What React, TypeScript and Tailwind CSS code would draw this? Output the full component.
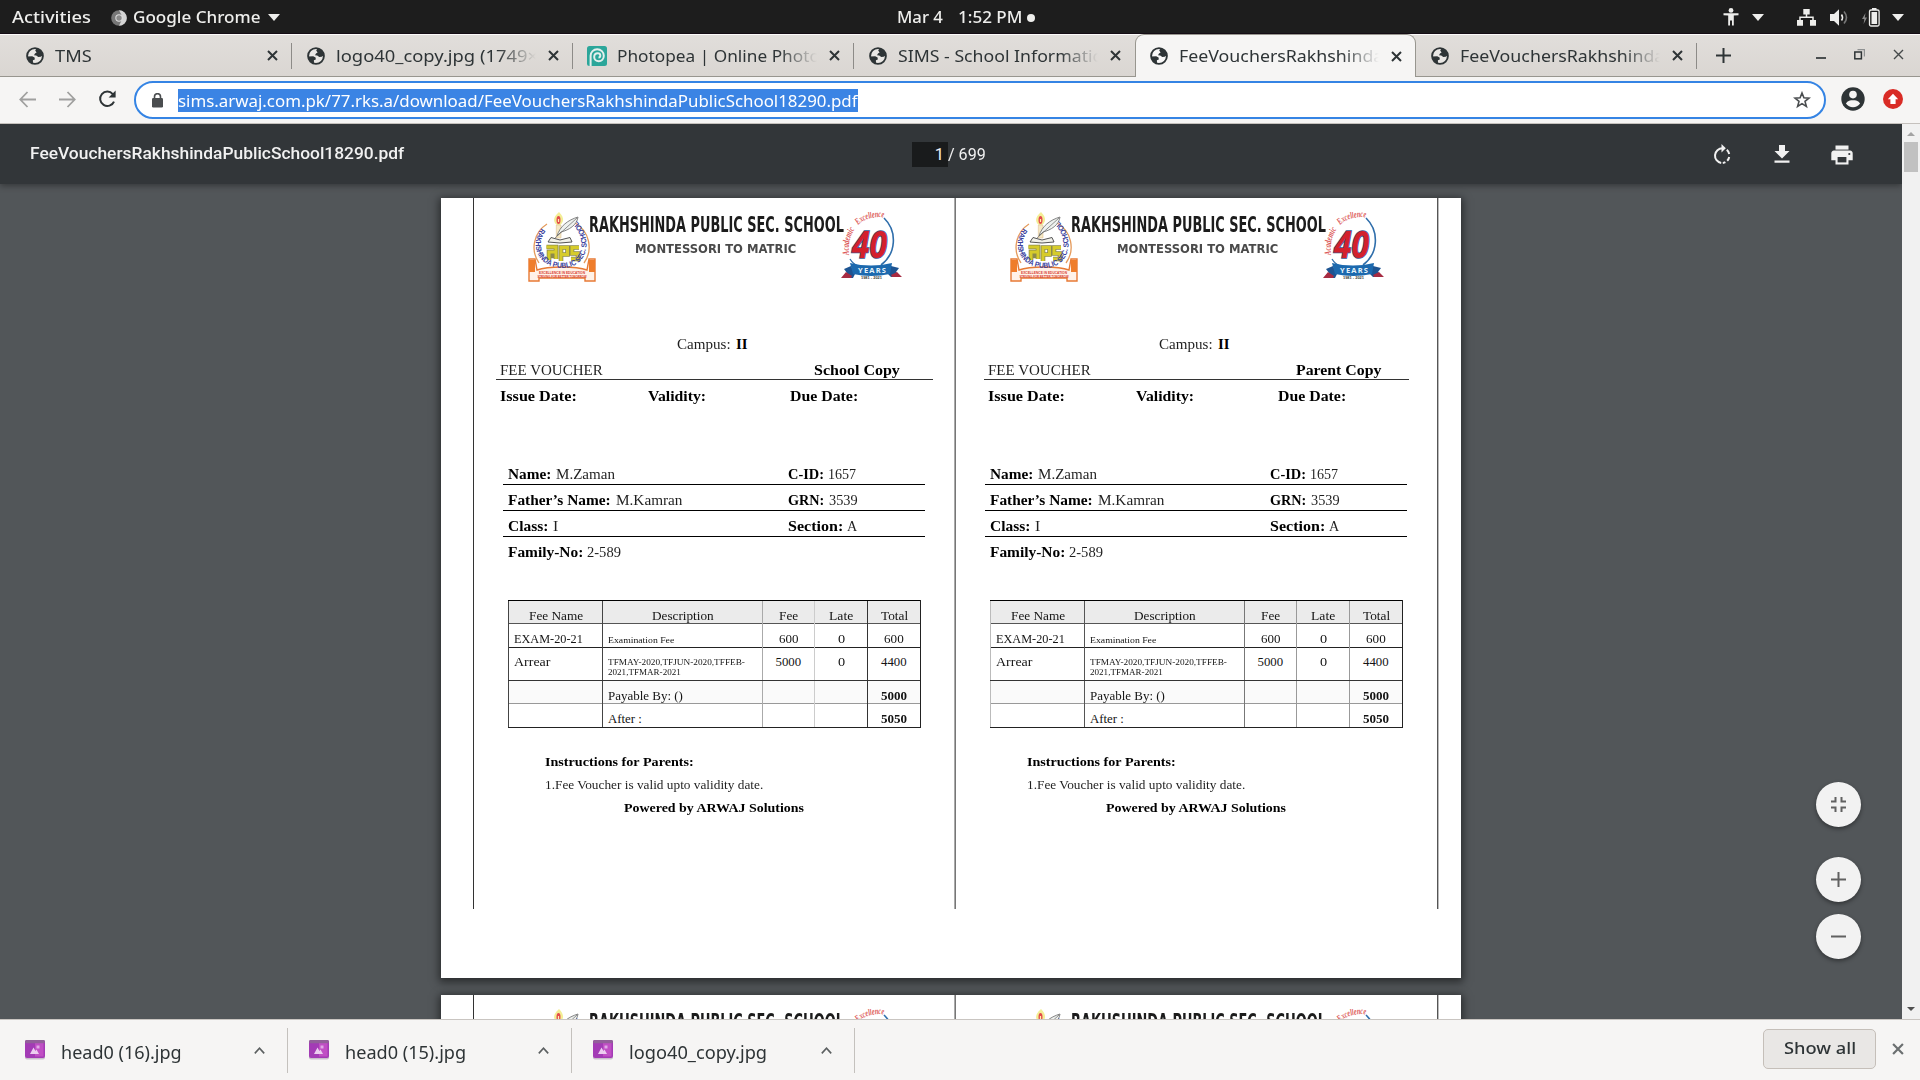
import { useLayoutEffect, useRef, useState, type ReactNode } from "react";

/* Stretches a run of text horizontally so that it fills a given width. */
function Fit({ w, className = "", children }: { w: number; className?: string; children: ReactNode }) {
  const ref = useRef<HTMLSpanElement>(null);
  const [k, setK] = useState(1);
  useLayoutEffect(() => {
    if (ref.current) setK(w / ref.current.offsetWidth);
  }, [w]);
  return (
    <span className={"inline-block shrink-0 whitespace-pre text-left " + className} style={{ width: w }}>
      <span ref={ref} className="inline-block origin-left" style={{ transform: `scaleX(${k})` }}>
        {children}
      </span>
    </span>
  );
}

const Globe = () => (
  <svg width="18" height="18" viewBox="0 0 18 18" className="shrink-0">
    <circle cx="9" cy="9" r="7.9" fill="#fff" fillOpacity="0.35" stroke="#2e3436" strokeWidth="1.9" />
    <path d="M10.5 1.5 9.2 3.6 10.6 5.4 9 6.6 8 8.2 10.2 8.6 12.3 9.9 14.7 9.8 16.6 8.6A8 8 0 0 0 10.5 1.5Z" fill="#2e3436" />
    <path d="M1.3 9.4 6.2 9.3 8.6 10.6 8.8 12.4 6.9 13.3 7 16.6A8 8 0 0 1 1.3 9.4Z" fill="#2e3436" />
  </svg>
);

const Photopea = () => (
  <svg width="20" height="20" viewBox="0 0 20 20" className="shrink-0">
    <rect width="20" height="20" rx="2.5" fill="#2ba69a" />
    <path d="M3.6 20V9.8a6.6 6.6 0 0 1 13.2 0c0 3.4-2.5 5.4-5 5.4-2.6 0-4.6-1.7-4.6-4.3 0-2.2 1.6-3.7 3.5-3.7 1.5 0 2.6 1 2.6 2.4 0 1.2-.8 2-1.8 2" fill="none" stroke="#e4efed" strokeWidth="2" />
  </svg>
);

const Cross = ({ size = 11, sw = 2, color = "#2e3436" }: { size?: number; sw?: number; color?: string }) => (
  <svg width={size} height={size} viewBox="0 0 11 11" className="shrink-0">
    <path d="M1 1 10 10M10 1 1 10" stroke={color} strokeWidth={sw} />
  </svg>
);

const Down = () => (
  <svg width="12" height="7" viewBox="0 0 12 7">
    <path d="M0 0H12L6 7Z" fill="#eeeeec" />
  </svg>
);

function TopBar() {
  return (
    <div className="grid h-[34px] grid-cols-[897px_1fr_201px] items-center border-b border-[#150d15] bg-[#1d1d1d] text-[16px] font-medium leading-[33px] text-[#eeeeec]">
      <div className="flex items-center pl-3">
        <Fit w={79} className="pt-px">Activities</Fit>
        <svg width="16" height="16" viewBox="0 0 16 16" className="ml-[20px] mr-[6px] mt-px">
          <circle cx="8" cy="8" r="7.8" fill="#777" />
          <path d="M8 .2a7.8 7.8 0 0 1 0 15.6L11 9.5 10.5 5Z" fill="#d4d4d4" />
          <circle cx="8" cy="8" r="3.7" fill="#e0e0e0" />
          <circle cx="8" cy="8" r="2.7" fill="#8a8a8a" />
        </svg>
        <Fit w={128} className="mr-[7px] pt-px">Google Chrome</Fit>
        <Down />
      </div>
      <div className="flex items-center">
        <Fit w={46} className="pt-px">Mar 4</Fit>
        <Fit w={64} className="ml-[15px] pt-px">1:52 PM</Fit>
        <span className="ml-[5px] mt-px size-2 rounded-full bg-[#eeeeec]" />
      </div>
      <div className="flex items-center pl-px">
        <svg width="16" height="18" viewBox="0 0 16 18" className="ml-[3px]" fill="#eeeeec">
          <circle cx="8" cy="2.4" r="2.4" />
          <path d="M.5 5.2H15.5V7.2L10.8 7.6V17.5H9V12.5H7V17.5H5.2V7.6L.5 7.2Z" />
        </svg>
        <span className="ml-[13px]"><Down /></span>
        <svg width="19" height="17" viewBox="0 0 19 17" className="ml-[33px]" fill="#eeeeec">
          <path d="M6.3 0h6.4v5.4H6.3zM0 11h6v5.8H0zM13 11h6v5.8h-6z" />
          <path d="M9.5 5V8.3M3 11.5V8.3H16V11.5" fill="none" stroke="#eeeeec" strokeWidth="1.5" />
        </svg>
        <svg width="19" height="17" viewBox="0 0 19 17" className="ml-[14px]">
          <path d="M0 5H4L9 .3V16.7L4 12H0Z" fill="#eeeeec" />
          <path d="M11.5 5.5Q13.5 8.5 11.5 11.5" fill="none" stroke="#eeeeec" strokeWidth="1.6" />
          <path d="M14 2.5Q19 8.5 14 14.5" fill="none" stroke="#777" strokeWidth="1.6" />
        </svg>
        <svg width="18" height="19" viewBox="0 0 18 19" className="ml-[13px]">
          <path d="M3.5 5 0 11H2.3L1.6 16 5 9.5H2.8Z" fill="#888" />
          <rect x="7.5" y="2" width="9.6" height="16" rx="1.5" fill="none" stroke="#eeeeec" strokeWidth="1.3" />
          <path d="M10 0h4.5v2H10z" fill="#eeeeec" />
          <rect x="9.5" y="4" width="5.6" height="12" fill="#eeeeec" />
        </svg>
        <span className="ml-[12px]"><Down /></span>
      </div>
    </div>
  );
}

type TabData = { title: string; w: number; icon?: "pea"; active?: boolean; noSep?: boolean; fade?: boolean };
const tabs: TabData[] = [
  { title: "TMS", w: 36.5 },
  { title: "logo40_copy.jpg (1749×", w: 202, fade: true },
  { title: "Photopea | Online Photo", w: 203, icon: "pea", fade: true },
  { title: "SIMS - School Informatic", w: 203, noSep: true, fade: true },
  { title: "FeeVouchersRakhshinda", w: 204, active: true, fade: true },
  { title: "FeeVouchersRakhshinda", w: 204, fade: true },
];

function TabStrip() {
  return (
    <div className="flex h-[43px] bg-gradient-to-b from-[#e1dedb] to-[#dad6d2] pl-[11px] text-[17px] text-[#2e3436] shadow-[inset_0_1px_0_#fbfaf9,inset_0_-1px_0_#98968f]">
      {tabs.map((t, i) => (
        <div
          key={i}
          className={
            "relative flex w-[281px] shrink-0 items-center " +
            (t.active ? "rounded-t-[9px] border-x border-t border-[#98968f] bg-[#f6f5f4] pl-[14px]" : "pl-[15px]")
          }
        >
          {t.icon ? <span className="-ml-px"><Photopea /></span> : <Globe />}
          <div
            className={
              "w-[200px] overflow-hidden pb-px leading-[25px] " + (t.icon ? "ml-[10px] " : "ml-[11px] ") +
              (t.fade ? "[mask-image:linear-gradient(to_right,#000_81%,transparent)]" : "")
            }
          >
            <Fit w={t.w}>{t.title}</Fit>
          </div>
          <span className="ml-[12px] flex"><Cross /></span>
          {!t.active && !t.noSep && <span className="absolute right-0 top-[9px] h-[26px] w-px bg-[#8d8b88]" />}
        </div>
      ))}
      <svg width="15" height="15" viewBox="0 0 15 15" className="ml-[19px] mt-[14px]">
        <path d="M7.5 0V15M0 7.5H15" stroke="#2e3436" strokeWidth="2" />
      </svg>
      <span className="ml-[85px] mt-[23px] h-[1.5px] w-[10px] bg-[#4b4f50]" />
      <svg width="11" height="11" viewBox="0 0 11 11" className="ml-[28px] mt-[15px]" fill="none">
        <path d="M3.5 .6H10.4V7.5" stroke="#8f9192" strokeWidth="1.2" />
        <rect x=".8" y="3" width="6.6" height="6.8" stroke="#2e3436" strokeWidth="1.5" />
      </svg>
      <span className="ml-[28px] mt-[15px]"><Cross sw={1.4} color="#45494a" /></span>
    </div>
  );
}

function AddressBar() {
  return (
    <div className="flex h-[47px] items-center border-b border-[#c5c1bd] bg-[#f6f5f4] pl-[19px]">
      <svg width="17" height="17" viewBox="0 0 17 17" fill="none" stroke="#a0a09f" strokeWidth="1.8" className="-mt-[2px]">
        <path d="M8.5 1 1.3 8.5 8.5 16M1.3 8.5H17" />
      </svg>
      <svg width="17" height="17" viewBox="0 0 17 17" fill="none" stroke="#a0a09f" strokeWidth="1.8" className="-mt-[2px] ml-[23px]">
        <path d="M8.5 1 15.7 8.5 8.5 16M15.7 8.5H0" />
      </svg>
      <svg width="19" height="18" viewBox="0 0 19 18" className="-mt-[2px] ml-[22px]">
        <path d="M14.8 4.1A7.2 7.2 0 1 0 16 11.6" fill="none" stroke="#2e3436" strokeWidth="2" />
        <path d="M17.6.6V7.6H10.6Z" fill="#2e3436" />
      </svg>
      <div className="ml-[17px] flex h-[38px] w-[1692px] items-center rounded-full border-2 border-[#3584e4] bg-white pl-[16px]">
        <svg width="11" height="15" viewBox="0 0 11 15">
          <rect y="5" width="11" height="9.5" rx="1.2" fill="#4a4d4f" />
          <path d="M2.5 6V3.7a3 3 0 0 1 6 0V6" fill="none" stroke="#4a4d4f" strokeWidth="1.6" />
        </svg>
        <div className="ml-[15px] h-[23px] bg-[#3b84e4] text-[17px] leading-[23px] text-white">
          <Fit w={680}>sims.arwaj.com.pk/77.rks.a/download/FeeVouchersRakhshindaPublicSchool18290.pdf</Fit>
        </div>
        <svg width="18" height="18" viewBox="0 0 18 18" className="-mt-px ml-[935px]">
          <path d="M9 2 10.9 6.8 16 7.1 12 10.4 13.4 15.5 9 12.6 4.6 15.5 6 10.4 2 7.1 7.1 6.8Z" fill="none" stroke="#4a4d4f" strokeWidth="1.6" />
        </svg>
      </div>
      <svg width="24" height="24" viewBox="0 0 24 24" className="-mt-[2px] ml-[15px]">
        <circle cx="12" cy="12" r="11.7" fill="#2e3436" />
        <circle cx="12" cy="7.6" r="3.8" fill="#f6f5f4" />
        <path d="M4.9 16.4C6.5 13.6 9.5 13.2 12 13.2S17.5 13.6 19.1 16.4A8.6 8.6 0 0 1 4.9 16.4Z" fill="#f6f5f4" />
      </svg>
      <svg width="20" height="20" viewBox="0 0 20 20" className="-mt-[2px] ml-[18px]">
        <circle cx="10" cy="10" r="10" fill="#d92b25" />
        <path d="M10 4.8 15.2 10.3H12.6V15H7.4V10.3H4.8Z" fill="#fff" />
      </svg>
    </div>
  );
}

function PdfToolbar() {
  return (
    <div className="relative z-10 grid h-[60px] grid-cols-[882px_1fr_191px] items-center bg-[#323639] pl-[30px] font-['Roboto'] text-[16.5px] text-[#f1f1f1] shadow-[0_2px_6px_rgba(0,0,0,0.35)]">
      <Fit w={374} className="font-medium leading-[20px]">FeeVouchersRakhshindaPublicSchool18290.pdf</Fit>
      <div className="flex items-center">
        <span className="mt-px h-[25px] w-[36px] bg-[#191b1c] pr-[4px] text-right leading-[25px]">1</span>
        <Fit w={38} className="mt-px leading-[25px]">/ 699</Fit>
      </div>
      <div className="flex items-center">
        <svg width="18" height="21" viewBox="0 0 18 21" className="ml-[2px]" fill="none" stroke="#f1f1f1" strokeWidth="2">
          <path d="M9.5 4.3A7.4 7.4 0 0 0 8.2 19" />
          <path d="M8.5 0V8.4L12.8 4.2Z" fill="#f1f1f1" stroke="none" />
          <path d="M13.8 5.8A7.3 7.3 0 0 1 16.2 10M16.2 13A7.3 7.3 0 0 1 14.2 16.8M12.4 18.2A7.3 7.3 0 0 1 9.8 19" />
        </svg>
        <svg width="16" height="18" viewBox="0 0 16 18" className="ml-[43px]" fill="#f1f1f1">
          <path d="M5 0H11V6H15.5L8 13.4.5 6H5ZM.5 15.6H15.5V17.8H.5Z" />
        </svg>
        <svg width="22" height="20" viewBox="0 0 22 20" className="ml-[41px] mt-px">
          <path d="M4.5.5H17.5V4.6H4.5Z" fill="#f1f1f1" />
          <path d="M3 5.6H19A3 3 0 0 1 21.7 8.6V15.2H17.5V19.5H4.5V15.2H.3V8.6A3 3 0 0 1 3 5.6Z" fill="#f1f1f1" />
          <path d="M6.6 12H15.4V17.4H6.6Z" fill="#323639" />
          <circle cx="18.3" cy="9" r="1.1" fill="#323639" />
        </svg>
      </div>
    </div>
  );
}

const Crest = ({ id }: { id: string }) => (
  <svg width="68" height="70" viewBox="0 0 68 70" className="shrink-0">
    <defs>
      <path id={id} d="M13.5 16C6 26 6 38 12 46 21 58 45 60 54 47 61 37 60 22 50 10.5" />
    </defs>
    <path d="M31 0C24 6 25 11 30.5 14 36 11 37 6 31 0Z" fill="#f3ee96" />
    <path d="M19 12A27.5 27.5 0 0 0 11 51M47 11A27.5 27.5 0 0 1 56 51" fill="none" stroke="#e59b5c" strokeWidth="1.3" />
    <ellipse cx="30.5" cy="8" rx="2" ry="4" fill="#e34b4b" />
    <path d="M30.5 7V10" stroke="#fff3b0" strokeWidth="1.2" />
    <path d="M28.3 13H33V26H28.3Z" fill="#f6e9c4" stroke="#d9b98a" strokeWidth=".5" />
    <path d="M20 30 23 25.5 32 28 42 25.5 44 30 32 31Z" fill="#f1f1ea" stroke="#555" strokeWidth="1" />
    <path d="M29 24C32 14 40 8 50 5 49 13 41 18 33 20Z" fill="#eef1ef" stroke="#777" strokeWidth=".9" />
    <path d="M27 26 49 6" stroke="#666" strokeWidth=".7" />
    <path d="M18.5 35H28V47M21 48V40H28M21.5 44H28M33 49V35.5H39.5V42.5H34M51 35.5H44V41.5H50V47H43" fill="none" stroke="#8d8a4a" strokeWidth="4.6" />
    <path d="M18.5 35H28V47M21 48V40H28M33 49V35.5H39.5V42.5H34M51 35.5H44V41.5H50V47H43" fill="none" stroke="#d6cb2a" strokeWidth="3" />
    <path d="M1 47H7L9 58C20 54 48 54 59 58L61 47H67V69H57V66H11V69H1Z" fill="#fff2e8" stroke="#e77a35" strokeWidth="1.4" />
    <path d="M1 48H7V60H1ZM61 48H67V60H61Z" fill="#ef7d2b" />
    <text fontFamily="Liberation Sans" fontWeight="700" fontSize="7.6" fill="#3a3f9e">
      <textPath href={"#" + id} textLength="121" lengthAdjust="spacingAndGlyphs">RAKHSHINDA PUBLIC SEC. SCHOOL</textPath>
    </text>
    <g fontFamily="Liberation Sans" fontWeight="700" fontSize="4" fill="#d8402f">
      <text x="11" y="62.2" textLength="46" lengthAdjust="spacingAndGlyphs">EXCELLENCE IN EDUCATION</text>
      <text x="9.5" y="66.4" textLength="49" lengthAdjust="spacingAndGlyphs">STRIVING FOR BETTER TOMORROW</text>
    </g>
  </svg>
);

const Forty = ({ id }: { id: string }) => (
  <svg width="61" height="67" viewBox="0 0 61 67" className="shrink-0">
    <defs>
      <path id={id + "a"} d="M8 43C7 34 8 25 14 17" />
      <path id={id + "b"} d="M17 13C23 7 32 4 44 5.5" />
    </defs>
    <path d="M43 6A31 31 0 0 1 40 53" fill="none" stroke="#2f6eab" strokeWidth="1.6" />
    <path d="M9 47Q12 52 17 54" fill="none" stroke="#2f6eab" strokeWidth="1.3" />
    <g fontFamily="Liberation Serif" fontStyle="italic" fontWeight="700" fontSize="9.5" fill="#dc5a58">
      <text>
        <textPath href={"#" + id + "a"} textLength="27" lengthAdjust="spacingAndGlyphs">Academic</textPath>
      </text>
      <text>
        <textPath href={"#" + id + "b"} textLength="28" lengthAdjust="spacingAndGlyphs">Excellence</textPath>
      </text>
    </g>
    <text x="11" y="45.5" fontFamily="Noto Sans" fontStyle="italic" fontWeight="700" fontSize="37" fill="#d3202c" stroke="#3a5590" strokeWidth="1.6" paintOrder="stroke" textLength="35" lengthAdjust="spacingAndGlyphs">40</text>
    <path d="M1 66 6 61 3 57 10 54 14 62 12 66ZM60 65 55 60 58 56 50 54 47 62 50 65Z" fill="#1d5492" />
    <path d="M0 66 5 60 11 64 10 66ZM61 65 56 60 50 63 51 65Z" fill="#a62b42" />
    <path d="M9 51Q30 56 51 51L49 62Q30 66 12 62Z" fill="#1c69ae" />
    <text x="17" y="61" fontFamily="Open Sans" fontWeight="700" fontSize="7.5" fill="#e6f4fb" textLength="28" lengthAdjust="spacing">YEARS</text>
    <text x="20" y="67" fontFamily="Liberation Sans" fontWeight="700" fontSize="4" fill="#333" textLength="21" lengthAdjust="spacingAndGlyphs">1981 - 2021</text>
  </svg>
);

function Letterhead({ id }: { id: string }) {
  return (
    <div className="flex h-[133px] pl-[54px] pt-[14px]">
      <Crest id={id + "c"} />
      <div className="-ml-[7px] flex w-[255px] flex-col font-['DejaVu_Sans'] font-bold">
        <Fit w={255} className="mt-px text-[22px] leading-[23px] text-[#1c1c1c]">RAKHSHINDA PUBLIC SEC. SCHOOL</Fit>
        <Fit w={161} className="ml-[46px] mt-[4px] text-[12.6px] leading-[18px] text-[#4a4a4a]">MONTESSORI TO MATRIC</Fit>
      </div>
      <span className="-ml-[3px]"><Forty id={id + "f"} /></span>
    </div>
  );
}

type Pair = [string, number, number, string, number];
const people: { left: Pair; right?: Pair }[] = [
  { left: ["Name:", 43.4, 4.6, "M.Zaman", 59], right: ["C-ID:", 36, 4.3, "1657", 28.5] },
  { left: ["Father’s Name:", 103, 4.7, "M.Kamran", 67], right: ["GRN:", 36.5, 4.5, "3539", 29] },
  { left: ["Class:", 40.7, 4, "I", 5.3], right: ["Section:", 55.3, 4.4, "A", 10.5] },
  { left: ["Family-No:", 75, 4, "2-589", 34.4] },
];

const PairText = ({ p }: { p: Pair }) => (
  <div className="flex">
    <Fit w={p[1]} className="font-bold">{p[0]}</Fit>
    <span style={{ width: p[2] }} />
    <Fit w={p[4]} className="text-[#1f1f1f]">{p[3]}</Fit>
  </div>
);

type Cell = { t: string; w: number; cls?: string };
const rows: { h: string; cells: (Cell | Cell[] | null)[] }[] = [
  { h: "h-[23px] bg-[#ebebeb] border-black", cells: [{ t: "Fee Name", w: 54 }, { t: "Description", w: 62 }, { t: "Fee", w: 18.7 }, { t: "Late", w: 24.5 }, { t: "Total", w: 27 }] },
  { h: "h-[24px] border-[#555]", cells: [{ t: "EXAM-20-21", w: 69 }, { t: "Examination Fee", w: 66, cls: "text-[9px] pt-px" }, { t: "600", w: 19.3 }, { t: "0", w: 6.7 }, { t: "600", w: 19.5 }] },
  { h: "h-[33px] border-[#222]", cells: [{ t: "Arrear", w: 36 }, [{ t: "TFMAY-2020,TFJUN-2020,TFFEB-", w: 137 }, { t: "2021,TFMAR-2021", w: 73 }], { t: "5000", w: 26 }, { t: "0", w: 6.7 }, { t: "4400", w: 26 }] },
  { h: "h-[23px] border-[#333] bg-[#fafafa]", cells: [null, { t: "Payable By: ()", w: 75 }, null, null, { t: "5000", w: 26.5, cls: "font-bold" }] },
  { h: "h-[24px] border-[#999]", cells: [null, { t: "After :", w: 34 }, null, null, { t: "5050", w: 26.5, cls: "font-bold" }] },
];

function FeeTable({ second }: { second: boolean }) {
  const edges = second
    ? ["border-[#bbb]", "border-[#555]", "border-[#777]", "border-[#999]", "border-[#999]"]
    : ["border-[#444]", "border-[#444]", "border-[#aaa]", "border-[#ccc]", "border-[#333]"];
  return (
    <div className="ml-[34px] w-[413px] border-b border-r border-[#222] text-[12.8px] leading-[16px] text-[#141414]">
      {rows.map((r, i) => (
        <div key={i} className={"grid grid-cols-[94px_160px_52px_53px_53px] border-t " + r.h}>
          {r.cells.map((c, j) => {
            const centred = i === 0 || j > 1;
            return (
              <div key={j} className={"flex border-l " + edges[j] + (i === 2 ? " pt-[6px]" : " pt-[7px]") + (centred ? " justify-center" : " pl-[5px]")}>
                {Array.isArray(c) ? (
                  <div className="flex flex-col pt-[3px] text-[9.2px] leading-[10px]">
                    {c.map((l) => <Fit key={l.t} w={l.w}>{l.t}</Fit>)}
                  </div>
                ) : (
                  c && <Fit w={c.w} className={c.cls}>{c.t}</Fit>
                )}
              </div>
            );
          })}
        </div>
      ))}
    </div>
  );
}

function Voucher({ copy, second = false, id }: { copy: string; second?: boolean; id: string }) {
  return (
    <div className={"h-[711px] w-[482px] shrink-0 border-l font-['Liberation_Serif'] text-[14.8px] leading-[26px] text-black " + (second ? "border-[#777] shadow-[-1px_0_0_#aaa]" : "border-[#333]")}>
      <Letterhead id={id} />
      <div className="flex h-[26px] pl-[203px]">
        <Fit w={54} className="text-[#1f1f1f]">Campus:</Fit>
        <Fit w={12} className="ml-[5px] font-bold">II</Fit>
      </div>
      <div className={"flex h-[23px] border-b border-[#333] pl-[4px] " + (second ? "ml-[28px] w-[425px]" : "ml-[22px] w-[437px]")}>
        <Fit w={102.5} className="text-[#1f1f1f]">FEE VOUCHER</Fit>
        <Fit w={85.5} className={"font-bold " + (second ? "ml-[205px]" : "ml-[211px]")}>{copy}</Fit>
      </div>
      <div className={"mt-[3px] flex h-[26px] font-bold " + (second ? "pl-[32px]" : "pl-[26px]")}>
        <Fit w={76.5}>Issue Date:</Fit>
        <Fit w={58.5} className="ml-[71px]">Validity:</Fit>
        <Fit w={68.5} className="ml-[84px]">Due Date:</Fit>
      </div>
      <div className="ml-[29px] mt-[52px] flex w-[422px] flex-col gap-[2px]">
        {people.map((r, i) => (
          <div key={i} className={"grid h-[24px] grid-cols-[279.5px_1fr] pl-[5px] " + (i < 3 ? "border-b border-black" : "")}>
            <PairText p={r.left} />
            {r.right && <PairText p={r.right} />}
          </div>
        ))}
      </div>
      <div className="h-[37px]" />
      <FeeTable second={second} />
      <div className="flex flex-col pl-[71px] pt-[22px] text-[13px] leading-[23px]">
        <Fit w={149} className="font-bold">Instructions for Parents:</Fit>
        <Fit w={218} className="text-[#1f1f1f]">1.Fee Voucher is valid upto validity date.</Fit>
        <Fit w={180} className="ml-[79px] font-bold">Powered by ARWAJ Solutions</Fit>
      </div>
    </div>
  );
}

const Page = ({ id }: { id: string }) => (
  <div className="flex h-[780px] w-[1020px] shrink-0 bg-white pl-[32px] shadow-[0_2px_8px_2px_rgba(0,0,0,0.5)]">
    <Voucher copy="School Copy" id={id + "s"} />
    <Voucher copy="Parent Copy" second id={id + "p"} />
    <div className="h-[711px] w-[2px] border-l border-[#555] bg-[#bbb]" />
  </div>
);

const RoundButton = ({ d, className = "" }: { d: string; className?: string }) => (
  <div className={"flex size-[45px] items-center justify-center rounded-full bg-[#f2f2f2] shadow-[0_2px_4px_rgba(0,0,0,0.4)] " + className}>
    <svg width="15" height="15" viewBox="0 0 15 15">
      <path d={d} fill="none" stroke="#616161" strokeWidth="2" />
    </svg>
  </div>
);

function Viewer() {
  return (
    <div className="flex h-[895px] overflow-hidden bg-[#525659]">
      <div className="relative w-[1902px] overflow-hidden">
        <PdfToolbar />
        <div className="flex flex-col gap-[17px] pl-[441px] pt-[14px]">
          <Page id="a" />
          <Page id="b" />
        </div>
        <div className="absolute right-[41px] top-[658px] z-10 flex flex-col">
          <RoundButton d="M0 4.5H4.5V0M10.5 0V4.5H15M15 10.5H10.5V15M4.5 15V10.5H0" />
          <RoundButton className="mt-[30px]" d="M7.5 0V15M0 7.5H15" />
          <RoundButton className="mt-[12px]" d="M0 7.5H15" />
        </div>
      </div>
      <div className="flex w-[18px] flex-col items-center bg-[#f1f1f1]">
        <svg width="8" height="4" viewBox="0 0 8 4" className="mt-[8px]"><path d="M0 4 4 0 8 4Z" fill="#a3a3a3" /></svg>
        <div className="mt-[6px] h-[30px] w-[14px] bg-[#c1c1c1]" />
        <svg width="8" height="4" viewBox="0 0 8 4" className="mb-[8px] mt-auto"><path d="M0 0H8L4 4Z" fill="#505050" /></svg>
      </div>
    </div>
  );
}

function Downloads() {
  const items = [
    { name: "head0 (16).jpg", w: 120.5 },
    { name: "head0 (15).jpg", w: 121 },
    { name: "logo40_copy.jpg", w: 138.5 },
  ];
  return (
    <div className="flex h-[61px] border-t border-[#c9c5c1] bg-[#f6f5f4] pl-[4px] text-[17.5px] text-[#2e3436]">
      {items.map((it) => (
        <div key={it.name} className="mt-[8px] flex h-[45px] w-[283.8px] border-r border-[#c4c1bd] pl-[21px]">
          <svg width="20" height="20" viewBox="0 0 20 20" className="mt-[12px]">
            <rect y="1" width="20" height="18.6" rx="2" fill="#c9bfcb" />
            <rect y="0" width="20" height="18" rx="2" fill="#a33bb5" />
            <path d="M10 3H18.5V16.5H10Z" fill="#c04fc4" />
            <rect width="20" height="3.2" rx="1.5" fill="#92609a" />
            <path d="M5 14 8.5 7.5 10.5 11 11.5 9.5 14 14Z" fill="#eccdf0" />
            <path d="M11.5 5.5h3v3h-3z" fill="#e0a9e6" />
          </svg>
          <Fit w={it.w} className="ml-[16px] mt-[11px] leading-[26px]">{it.name}</Fit>
          <svg width="11" height="7" viewBox="0 0 11 7" className="ml-auto mr-[22px] mt-[19px]">
            <path d="M.8 6.4 5.5 1.2 10.2 6.4" fill="none" stroke="#5b5f60" strokeWidth="1.6" />
          </svg>
        </div>
      ))}
      <div className="ml-auto mt-[9px] flex h-[40px] w-[113px] items-center justify-center rounded-[5px] border border-[#c5bfb9] bg-[#e9e7e5] pb-px text-[16.5px] font-medium">
        <Fit w={72}>Show all</Fit>
      </div>
      <span className="ml-[16px] mr-[16px] mt-[23px]"><Cross size={12} sw={2} color="#6b6f70" /></span>
    </div>
  );
}

export default function App() {
  return (
    <div className="h-[1080px] w-[1920px] overflow-hidden bg-[#525659] font-['Noto_Sans',sans-serif]">
      <TopBar />
      <TabStrip />
      <AddressBar />
      <Viewer />
      <Downloads />
    </div>
  );
}
